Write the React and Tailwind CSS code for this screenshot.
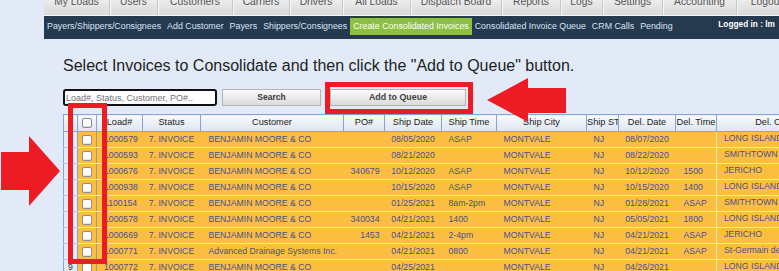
const tabs = [
  { label: "My Loads", w: "w-[66px]" },
  { label: "Users", w: "w-[48px]" },
  { label: "Customers", w: "w-[75px]" },
  { label: "Carriers", w: "w-[57px]" },
  { label: "Drivers", w: "w-[53px]" },
  { label: "All Loads", w: "w-[68px]" },
  { label: "Dispatch Board", w: "w-[91px]" },
  { label: "Reports", w: "w-[59px]" },
  { label: "Logs", w: "w-[42px]" },
  { label: "Settings", w: "w-[60px]" },
  { label: "Accounting", w: "w-[74px]" },
  { label: "Logout", w: "w-[60px]" },
];

const subNav = [
  "Payers/Shippers/Consignees",
  "Add Customer",
  "Payers",
  "Shippers/Consignees",
  "Create Consolidated Invoices",
  "Consolidated Invoice Queue",
  "CRM Calls",
  "Pending",
];

const cols = [
  { key: "n", label: "", w: "w-[14px]", cell: "text-center text-[#333]" },
  { key: "c", label: "", w: "w-[19px]", cell: "" },
  { key: "load", label: "Load#", w: "w-[46px]", cell: "text-left pl-[7px]" },
  { key: "status", label: "Status", w: "w-[58px]", cell: "text-center" },
  { key: "customer", label: "Customer", w: "w-[143px]", cell: "text-left pl-[8px]" },
  { key: "po", label: "PO#", w: "w-[41px]", cell: "text-right pr-[5px]" },
  { key: "shipDate", label: "Ship Date", w: "w-[57px]", cell: "text-center" },
  { key: "shipTime", label: "Ship Time", w: "w-[55px]", cell: "text-left pl-[7px]" },
  { key: "shipCity", label: "Ship City", w: "w-[90px]", cell: "text-left pl-[7px]" },
  { key: "shipSt", label: "Ship ST", w: "w-[32px]", cell: "text-left pl-[7px]" },
  { key: "delDate", label: "Del. Date", w: "w-[57px]", cell: "text-center" },
  { key: "delTime", label: "Del. Time", w: "w-[41px]", cell: "text-left pl-[8px]" },
  { key: "delCity", label: "Del. City", w: "w-[112px]", cell: "text-left pl-[7px] align-top leading-[12px] border-l border-l-[#fbe6b8]" },
];

const BMC = "BENJAMIN MOORE & CO";

const rows = [
  { load: "1000579", customer: BMC, po: "", shipDate: "08/05/2020", shipTime: "ASAP", delDate: "08/07/2020", delTime: "", delCity: "LONG ISLAND CITY" },
  { load: "1000593", customer: BMC, po: "", shipDate: "08/21/2020", shipTime: "", delDate: "08/22/2020", delTime: "", delCity: "SMITHTOWN" },
  { load: "1000676", customer: BMC, po: "340679", shipDate: "10/12/2020", shipTime: "ASAP", delDate: "10/12/2020", delTime: "1500", delCity: "JERICHO" },
  { load: "1000938", customer: BMC, po: "", shipDate: "10/15/2020", shipTime: "ASAP", delDate: "10/15/2020", delTime: "1400", delCity: "LONG ISLAND CITY" },
  { load: "1100154", customer: BMC, po: "", shipDate: "01/25/2021", shipTime: "8am-2pm", delDate: "01/28/2021", delTime: "ASAP", delCity: "SMITHTOWN" },
  { load: "1000578", customer: BMC, po: "340034", shipDate: "04/21/2021", shipTime: "1400", delDate: "05/05/2021", delTime: "1800", delCity: "LONG ISLAND CITY" },
  { load: "1000669", customer: BMC, po: "1453", shipDate: "04/21/2021", shipTime: "2-4pm", delDate: "04/21/2021", delTime: "ASAP", delCity: "JERICHO" },
  { load: "1000771", customer: "Advanced Drainage Systems Inc.", po: "", shipDate: "04/21/2021", shipTime: "0800", delDate: "04/21/2021", delTime: "ASAP", delCity: "St-Germain de Grantham" },
  { load: "1000772", customer: BMC, po: "", shipDate: "04/25/2021", shipTime: "", delDate: "04/26/2021", delTime: "", delCity: "LONG ISLAND CITY" },
];

function Box() {
  return (
    <div className="mx-auto w-[10px] h-[10px] bg-white border border-[#8c8c8c] rounded-[2px] shadow-[inset_0_-1px_1px_rgba(0,0,0,0.12)]" />
  );
}

export default function App() {
  return (
    <div className="relative w-[779px] h-[271px] overflow-hidden bg-[#e1eaf6] font-['Liberation_Sans',Arial,sans-serif]">
      {/* ================= TOP TABS ================= */}
      <div className="ml-[44px]">
        <div className="flex h-[16px] overflow-hidden border-b border-[#f5f5f5] bg-linear-to-b from-[#ececec] to-[#d9d9d9]">
          {tabs.map((t) => (
            <div
              key={t.label}
              className={`${t.w} shrink-0 flex justify-center border-r border-[#c6c6c6] shadow-[1px_0_0_#f7f7f7]`}
            >
              <span className="-mt-[3px] text-[10.3px] leading-[10px] text-[#555] whitespace-nowrap">
                {t.label}
              </span>
            </div>
          ))}
        </div>

        {/* ================= SUB NAV ================= */}
        <div className="flex items-start h-[23px] pt-[2px] bg-[#253a4f]">
          {subNav.map((s) => (
            <div
              key={s}
              className={`h-[17px] px-[3px] flex items-center text-[8.85px] whitespace-nowrap ${
                s === "Create Consolidated Invoices"
                  ? "bg-[#8dc03f] text-white"
                  : "text-[#d9e4f4]"
              }`}
            >
              {s}
            </div>
          ))}
          <div className="ml-auto mr-[4px] -mt-[2px] h-[17px] flex items-center text-[8.3px] font-bold text-white whitespace-nowrap">
            Logged in : lm
          </div>
        </div>
      </div>

      {/* ================= CONTENT ================= */}
      <div className="pl-[63px]">
        <h1 className="mt-[18px] text-[16px] leading-[18px] text-[#1e1e1e] whitespace-nowrap">
          Select Invoices to Consolidate and then click the "Add to Queue" button.
        </h1>

        <div className="flex mt-[14px] h-[17px]">
          <input
            placeholder="Load#, Status, Customer, PO#.."
            className="w-[154px] h-[17px] border-2 border-[#111] rounded-[3px] bg-white pl-px text-[9px] placeholder:text-[#707070] outline-none"
          />
          <button className="ml-[5px] w-[99px] h-[17px] border border-[#b4b4b4] bg-linear-to-b from-[#fbfbfb] to-[#dadada] text-[8.5px] font-bold text-[#3a3a3a]">
            Search
          </button>
          <button className="ml-[9px] w-[136px] h-[17px] border border-[#b4b4b4] bg-linear-to-b from-[#fbfbfb] to-[#dadada] text-[8.9px] font-bold text-[#444]">
            Add to Queue
          </button>
        </div>

        <table className="mt-[8px] table-fixed border-collapse w-[765px]">
          <colgroup>
            {cols.map((c) => (
              <col key={c.key} className={c.w} />
            ))}
          </colgroup>
          <thead>
            <tr>
              {cols.map((c) => (
                <th
                  key={c.key}
                  className="h-[17px] p-0 border border-[#86a5d5] bg-linear-to-b from-[#f8fafd] to-[#dde5f0] text-[9.2px] font-normal text-[#1a1a1a] text-center whitespace-nowrap overflow-hidden"
                >
                  {c.key === "c" ? <Box /> : c.label}
                </th>
              ))}
            </tr>
          </thead>
          <tbody>
            {rows.map((r, i) => (
              <tr key={r.load}>
                {cols.map((c) => {
                  if (c.key === "n") {
                    return (
                      <td
                        key={c.key}
                        className="h-[16px] p-0 border-l border-l-[#86a5d5] border-r border-r-[#86a5d5] border-b border-b-[#bcc8da] bg-[#e3ebf6] text-[8.7px] text-center text-[#333]"
                      >
                        {i + 1}
                      </td>
                    );
                  }
                  if (c.key === "c") {
                    return (
                      <td
                        key={c.key}
                        className="h-[16px] p-0 border-b border-b-[#fbe6b8] border-r border-r-[#9e9a8c] bg-[#fcbe40]"
                      >
                        <Box />
                      </td>
                    );
                  }
                  return (
                    <td
                      key={c.key}
                      className={`h-[16px] p-0 border-b border-b-[#fbe6b8] bg-[#fcbe40] text-[8.7px] text-[#4a4f8f] whitespace-nowrap overflow-hidden ${c.cell}`}
                    >
                      {c.key === "status" ? "7. INVOICE" : c.key === "shipCity" ? "MONTVALE" : c.key === "shipSt" ? "NJ" : r[c.key]}
                    </td>
                  );
                })}
              </tr>
            ))}
          </tbody>
        </table>
      </div>

      {/* ================= ANNOTATIONS ================= */}
      <div className="absolute left-[325px] top-[82px] w-[148px] h-[32px] border-[5px] border-[#ed1c24]" />
      <div className="absolute left-[68px] top-[103px] w-[39px] h-[161px] border-[5px] border-[#ed1c24]" />
      <svg className="absolute inset-0 pointer-events-none" width="779" height="271" viewBox="0 0 779 271">
        <polygon points="487,100 528,78 528,88 566,88 566,113 528,113 528,122" fill="#ed1c24" />
        <polygon points="60,171 29,136 29,152 1,152 1,190 29,190 29,206" fill="#ed1c24" />
      </svg>
    </div>
  );
}
